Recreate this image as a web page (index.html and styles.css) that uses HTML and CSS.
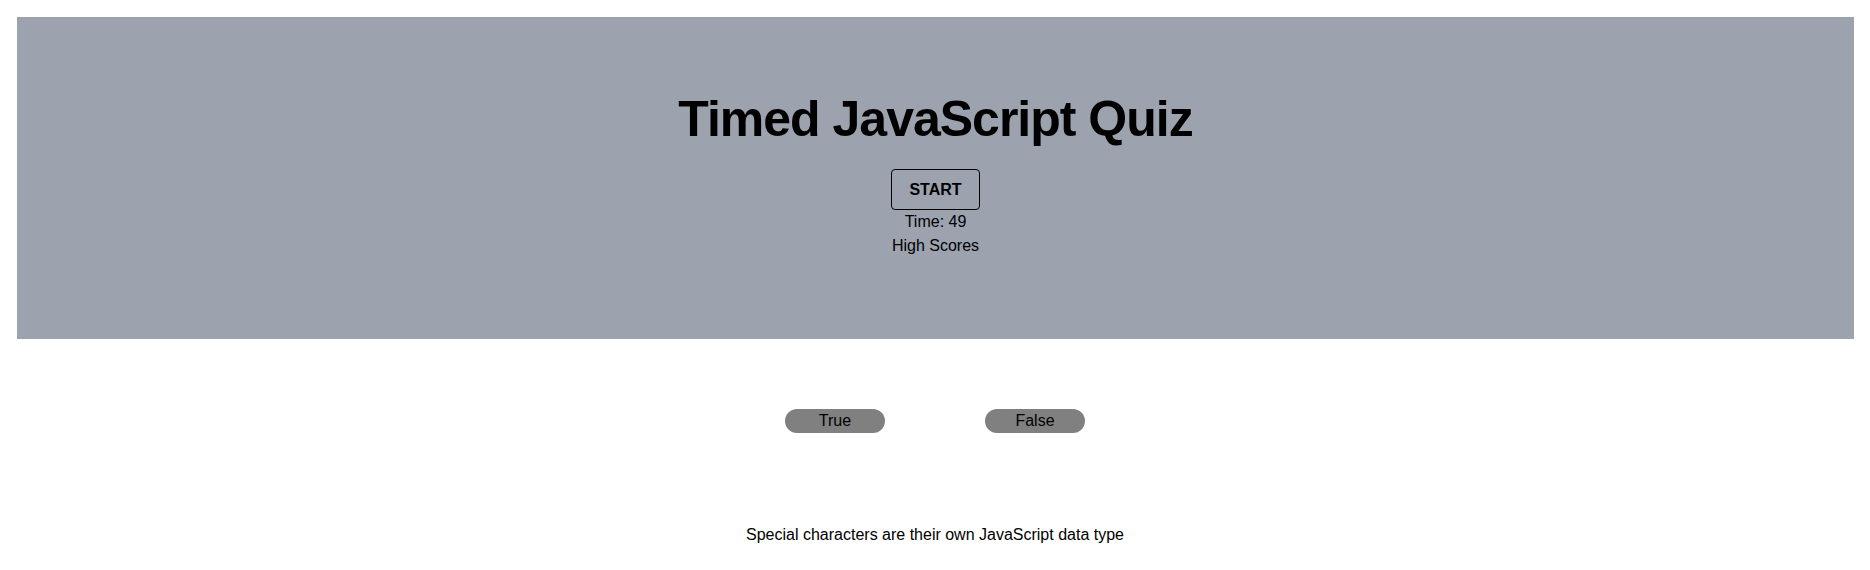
FILE: index.html
```html
<!DOCTYPE html>
<html lang="en">
<head>
<meta charset="utf-8">
<title>Timed JavaScript Quiz</title>
<link rel="stylesheet" href="styles.css">
</head>
<body>
  <header class="hero">
    <h1 class="hero-title">Timed JavaScript Quiz</h1>
    <button class="start-btn" type="button">START</button>
    <div class="timer">Time: 49</div>
    <div class="scores-link">High Scores</div>
  </header>
  <main class="quiz">
    <div class="answers">
      <button class="answer" type="button">True</button>
      <button class="answer" type="button">False</button>
    </div>
    <p class="question">Special characters are their own JavaScript data type</p>
  </main>
</body>
</html>
```

FILE: styles.css
```css
* {
  box-sizing: border-box;
}

html, body {
  margin: 0;
  padding: 0;
  background: #ffffff;
}

body {
  font-family: "Liberation Sans", Arial, Helvetica, sans-serif;
  font-size: 16px;
  color: #000000;
}

.hero {
  margin: 17px 16px 0 17px;
  height: 322px;
  padding-top: 72px;
  background: #9ca3af;
  display: flex;
  flex-direction: column;
  align-items: center;
}

.hero-title {
  margin: 0;
  font-size: 50px;
  line-height: 60px;
  font-weight: 700;
  letter-spacing: -1px;
}

.start-btn {
  margin-top: 20px;
  height: 41px;
  padding: 0 17px;
  border: 1px solid #000000;
  border-radius: 4px;
  background: transparent;
  font-family: inherit;
  font-size: 16px;
  font-weight: 700;
  color: #000000;
  line-height: 39px;
}

.timer,
.scores-link {
  line-height: 24px;
}

.quiz {
  display: flex;
  flex-direction: column;
  align-items: center;
  padding-top: 70px;
}

.answers {
  display: flex;
  justify-content: center;
  gap: 100px;
}

.answer {
  width: 100px;
  height: 24px;
  padding: 0;
  border: none;
  border-radius: 12px;
  background: #808080;
  font-family: inherit;
  font-size: 16px;
  line-height: 24px;
  color: #000000;
}

.question {
  margin: 93px 0 0 0;
  line-height: 18px;
}
```
